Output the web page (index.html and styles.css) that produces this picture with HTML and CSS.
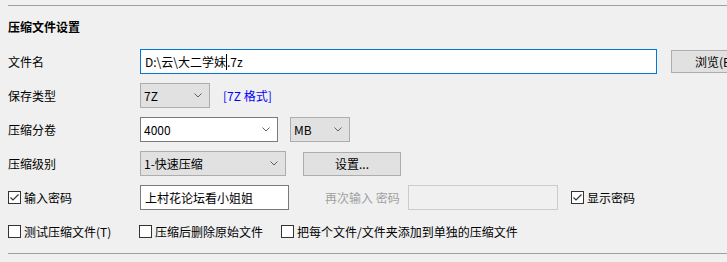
FILE: index.html
```html
<!DOCTYPE html>
<html lang="zh-CN">
<head>
  <meta charset="UTF-8" />
  <title>压缩文件设置</title>
  <link rel="stylesheet" href="styles.css">
</head>
<body>
  <div class="panel">
    <div class="rule"></div>
    <div class="title">压缩文件设置</div>

    <div class="row">
      <div class="label">文件名</div>
      <div class="field path focused"><span>D:\云\大二学妹</span><span class="caret"></span><span>.7z</span></div>
      <div class="btn browse">浏览(B)</div>
    </div>

    <div class="row">
      <div class="label">保存类型</div>
      <div class="combo list w-type">
        <span>7Z</span>
        <svg class="chev" width="8" height="5" viewBox="0 0 8 5"><path d="M0.5 0.5 L4 4 L7.5 0.5" /></svg>
      </div>
      <a class="link" href="#">[7Z 格式]</a>
    </div>

    <div class="row">
      <div class="label">压缩分卷</div>
      <div class="combo edit w-split">
        <span>4000</span>
        <svg class="chev" width="8" height="5" viewBox="0 0 8 5"><path d="M0.5 0.5 L4 4 L7.5 0.5" /></svg>
      </div>
      <div class="combo list w-unit">
        <span>MB</span>
        <svg class="chev" width="8" height="5" viewBox="0 0 8 5"><path d="M0.5 0.5 L4 4 L7.5 0.5" /></svg>
      </div>
    </div>

    <div class="row">
      <div class="label">压缩级别</div>
      <div class="combo list w-level">
        <span>1-快速压缩</span>
        <svg class="chev" width="8" height="5" viewBox="0 0 8 5"><path d="M0.5 0.5 L4 4 L7.5 0.5" /></svg>
      </div>
      <div class="btn settings">设置...</div>
    </div>

    <div class="row">
      <div class="label check">
        <span class="box on"><svg width="11" height="11" viewBox="0 0 11 11"><path d="M1.5 5.5 L4 8 L9.5 2.5" /></svg></span>
        <span>输入密码</span>
      </div>
      <div class="field pass">上村花论坛看小姐姐</div>
      <div class="dim">再次输入 密码</div>
      <div class="field disabled"></div>
      <div class="check show">
        <span class="box on"><svg width="11" height="11" viewBox="0 0 11 11"><path d="M1.5 5.5 L4 8 L9.5 2.5" /></svg></span>
        <span>显示密码</span>
      </div>
    </div>

    <div class="row opts">
      <div class="check opt1"><span class="box"></span><span>测试压缩文件(T)</span></div>
      <div class="check opt2"><span class="box"></span><span>压缩后删除原始文件</span></div>
      <div class="check"><span class="box"></span><span>把每个文件/文件夹添加到单独的压缩文件</span></div>
    </div>

    <div class="rule"></div>
  </div>
</body>
</html>
```

FILE: styles.css
```css
html, body {
  overflow: hidden;
}
body {
  margin: 0;
  background: #f0f0f0;
  color: #000;
  font-family: "Noto Sans CJK SC", "Microsoft YaHei", sans-serif;
  font-size: 12px;
}
.panel {
  padding-left: 8px;
  padding-top: 5px;
  width: 760px;
}
.rule {
  border-top: 1px solid #a0a0a0;
}
.title {
  font-weight: bold;
  line-height: 16px;
  margin: 13px 0 14px;
}
.row {
  display: flex;
  align-items: center;
  height: 25px;
  margin-bottom: 9px;
  white-space: nowrap;
}
.label {
  width: 132px;
  flex-shrink: 0;
}
.field {
  box-sizing: border-box;
  height: 25px;
  line-height: 23px;
  padding: 0 4px;
  background: #fff;
  border: 1px solid #7a7a7a;
  display: flex;
  align-items: center;
}
.path {
  width: 517px;
}
.focused {
  border-color: #0078d7;
}
.caret {
  display: inline-block;
  width: 1px;
  height: 16px;
  background: #000;
}
.pass {
  width: 149px;
}
.disabled {
  width: 150px;
  background: #f0f0f0;
  border-color: #cccccc;
}
.dim {
  color: #a0a0a0;
  margin-left: 36px;
  width: 83px;
}
.btn {
  box-sizing: border-box;
  background: #e1e1e1;
  border: 1px solid #adadad;
  text-align: center;
  line-height: 22px;
}
.browse {
  margin-left: 14px;
  height: 23px;
  width: 80px;
  flex-shrink: 0;
  padding-left: 8px;
}
.settings {
  margin-left: 17px;
  width: 98px;
  height: 24px;
}
.combo {
  box-sizing: border-box;
  height: 25px;
  border: 1px solid #adadad;
  background: #e1e1e1;
  display: flex;
  align-items: center;
  justify-content: space-between;
  padding: 0 7px 0 3px;
}
.combo.edit {
  background: #fff;
  border-color: #7a7a7a;
}
.chev path {
  fill: none;
  stroke: #606060;
  stroke-width: 1;
}
.w-type {
  width: 70px;
}
.w-split {
  width: 138px;
}
.w-unit {
  width: 60px;
  margin-left: 12px;
}
.w-level {
  width: 146px;
}
.link {
  color: #0000ff;
  text-decoration: none;
  margin-left: 13px;
}
.check {
  display: flex;
  align-items: center;
  gap: 3px;
}
.box {
  box-sizing: border-box;
  width: 13px;
  height: 13px;
  border: 1px solid #333;
  background: #fff;
  display: flex;
  align-items: center;
  justify-content: center;
}
.box path {
  fill: none;
  stroke: #333;
  stroke-width: 1.2;
}
.show {
  margin-left: 13px;
}
.opt1 {
  width: 131px;
}
.opt2 {
  width: 142px;
}
```
